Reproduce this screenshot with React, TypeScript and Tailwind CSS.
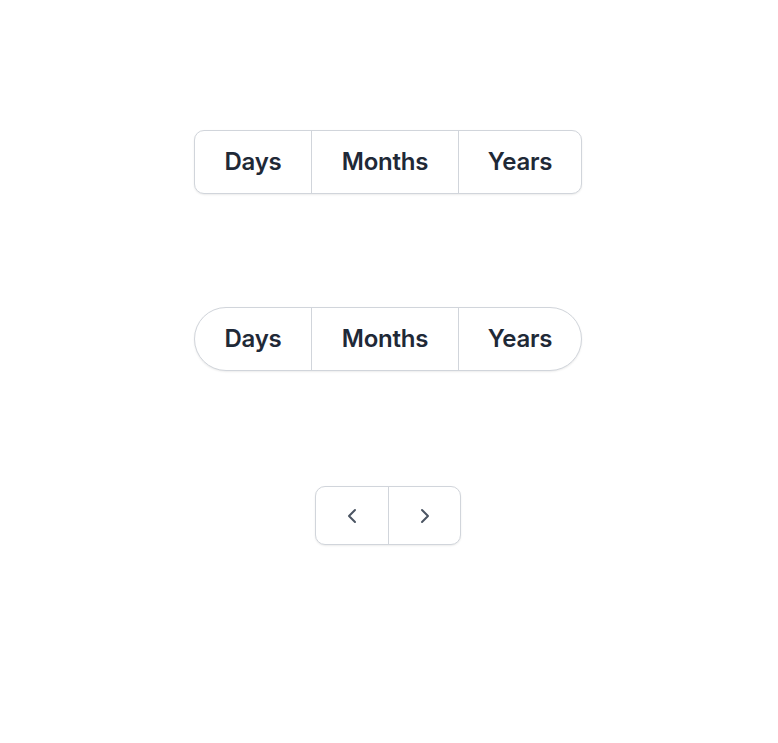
import React, { useState } from 'react';

const options = [
  { label: 'Days', width: 'w-[116px]' },
  { label: 'Months', width: 'w-[147px]' },
  { label: 'Years', width: 'w-[123px]' },
];

const SegmentGroup = ({ pill }: { pill?: boolean }) => {
  const [active, setActive] = useState(0);
  return (
    <div
      className={`flex overflow-hidden border border-[#d1d5db] bg-white shadow-[0_1px_2px_rgba(0,0,0,0.08)] ${
        pill ? 'rounded-full' : 'rounded-[10px]'
      }`}
    >
      {options.map((opt, i) => (
        <button
          key={opt.label}
          onClick={() => setActive(i)}
          aria-pressed={active === i}
          className={`${opt.width} py-[15px] text-2xl leading-8 font-semibold text-[#1f2937] tracking-[-0.01em] ${
            i > 0 ? 'border-l border-[#d1d5db]' : ''
          }`}
        >
          {opt.label}
        </button>
      ))}
    </div>
  );
};

export default function App() {
  return (
    <div className="min-h-screen bg-white font-['Inter',sans-serif] flex flex-col items-center pt-[130px] pr-[2px] gap-[113px]">
      <SegmentGroup />
      <SegmentGroup pill />

      {/* Pager */}
      <div className="mt-[2px] flex overflow-hidden rounded-[10px] border border-[#d1d5db] bg-white shadow-[0_1px_2px_rgba(0,0,0,0.08)]">
        <button aria-label="Previous" className="w-[72px] h-[57px] flex items-center justify-center text-[#4b5563]">
          <svg width="24" height="24" viewBox="0 0 24 24" fill="none" stroke="currentColor" strokeWidth={2} strokeLinecap="round" strokeLinejoin="round">
            <path d="M15 18l-6-6 6-6" />
          </svg>
        </button>
        <button aria-label="Next" className="w-[72px] h-[57px] flex items-center justify-center text-[#4b5563] border-l border-[#d1d5db]">
          <svg width="24" height="24" viewBox="0 0 24 24" fill="none" stroke="currentColor" strokeWidth={2} strokeLinecap="round" strokeLinejoin="round">
            <path d="M9 18l6-6-6-6" />
          </svg>
        </button>
      </div>
    </div>
  );
}
